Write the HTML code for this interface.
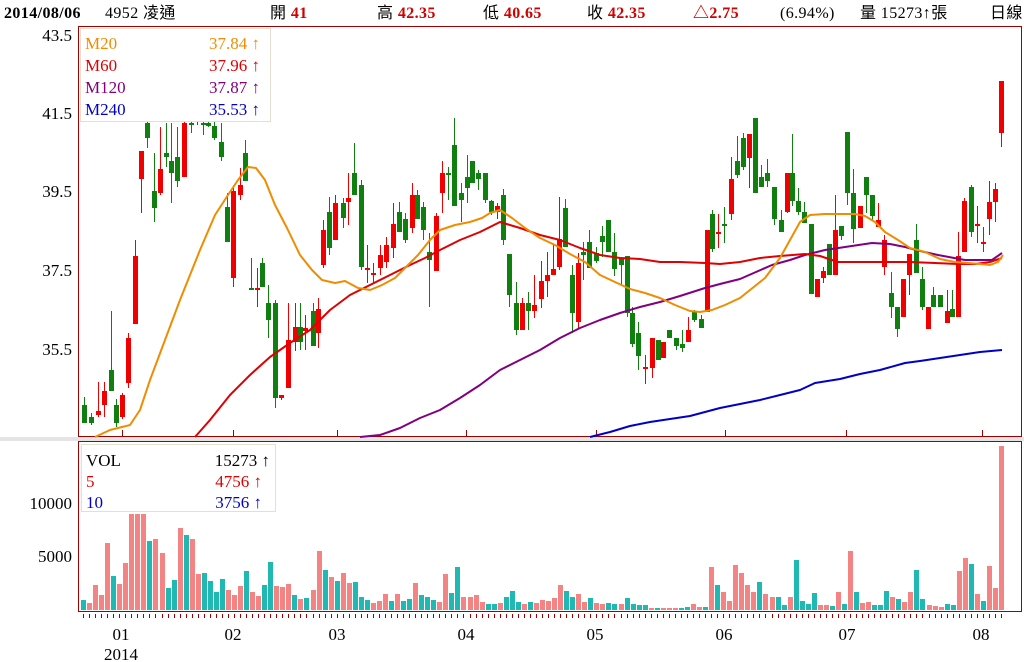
<!DOCTYPE html>
<html><head><meta charset="utf-8">
<style>
html,body{margin:0;padding:0;background:#fff;width:1024px;height:662px;overflow:hidden}
svg{display:block}
.s{font-family:"Liberation Serif","Noto Serif CJK SC",serif}
.h{font-family:"Liberation Serif","Noto Sans CJK TC",serif;font-size:16px;letter-spacing:0.4px}
</style></head><body>
<svg id="c" width="1024" height="662" xmlns="http://www.w3.org/2000/svg">
<rect x="0" y="437" width="1024" height="4" fill="#e4e4e4"/>
<text class="h" x="4" y="18" font-weight="bold" fill="#000">2014/08/06</text>
<text class="h" x="105" y="18" fill="#000">4952 凌通</text>
<text class="h" x="270" y="18" fill="#000">開 <tspan fill="#d00000" font-weight="bold">41</tspan></text>
<text class="h" x="377" y="18" fill="#000">高 <tspan fill="#d00000" font-weight="bold">42.35</tspan></text>
<text class="h" x="483" y="18" fill="#000">低 <tspan fill="#d00000" font-weight="bold">40.65</tspan></text>
<text class="h" x="587" y="18" fill="#000">收 <tspan fill="#d00000" font-weight="bold">42.35</tspan></text>
<text class="h" x="693" y="18" fill="#d00000" font-weight="bold">△2.75</text>
<text class="h" x="780" y="18" fill="#000">(6.94%)</text>
<text class="h" x="860" y="18" fill="#000">量 15273↑張</text>
<text class="h" x="990" y="18" fill="#000">日線</text>
<rect x="78.5" y="26.5" width="943" height="410" fill="none" stroke="#a00000"/>
<rect x="78.5" y="441.5" width="943" height="170" fill="none" stroke="#a00000"/>
<g class="s" font-size="17" fill="#000" text-anchor="end">
<text x="72" y="41">43.5</text><text x="72" y="119">41.5</text><text x="72" y="197">39.5</text><text x="72" y="276">37.5</text><text x="72" y="355">35.5</text>
<text x="72" y="509">10000</text><text x="72" y="562">5000</text>
</g>
<g class="s" font-size="17" fill="#000" text-anchor="middle">
<text x="121" y="640">01</text><text x="121" y="660">2014</text>
<text x="233" y="640">02</text><text x="337" y="640">03</text><text x="466" y="640">04</text>
<text x="595" y="640">05</text><text x="724" y="640">06</text><text x="847" y="640">07</text><text x="981" y="640">08</text>
</g>
<g stroke="#a00000" stroke-width="1">
<line x1="122.5" y1="430" x2="122.5" y2="437"/><line x1="233.5" y1="430" x2="233.5" y2="437"/><line x1="337.5" y1="430" x2="337.5" y2="437"/><line x1="466.5" y1="430" x2="466.5" y2="437"/><line x1="596.5" y1="430" x2="596.5" y2="437"/><line x1="725.5" y1="430" x2="725.5" y2="437"/><line x1="846.5" y1="430" x2="846.5" y2="437"/><line x1="982.5" y1="430" x2="982.5" y2="437"/>
</g>
<g id="cand"></g>
<g fill="none" stroke-width="2" stroke-linejoin="round">
<polyline stroke="#0000c8" points="590,437 610,432 630,426 650,422 670,419 690,416 705,412 720,408 740,404 760,400 780,395 800,390 815,383 840,379 860,374 880,370 905,363 920,361 940,358 960,355 980,352 1002,350"/>
<polyline stroke="#800080" points="360,437 380,435 400,428 420,418 440,410 460,398 480,385 500,370 520,360 540,350 560,338 580,328 600,320 620,313 640,307 660,302 680,296 705,288 720,284 740,279 772,265 790,260 805,255 825,250 845,247 872,243 890,244 905,247 920,251 938,255 965,260 992,260 1002,253"/>
<polyline stroke="#e00000" points="195,437 210,420 230,395 250,375 270,357 290,343 310,330 330,310 350,295 370,285 390,275 410,265 425,258 440,250 460,240 480,232 500,222 520,228 540,235 560,240 580,248 600,255 620,258 640,259 660,262 680,262 705,263 720,264 740,262 760,258 780,256 805,254 820,256 838,262 850,262 878,262 910,262 935,263 958,264 975,264 990,262 1002,258"/>
<polyline stroke="#f08c00" points="95,437 110,430 122,427 130,425 140,410 150,380 165,340 180,300 200,250 215,215 228,195 238,180 248,167 256,168 265,180 275,205 287,228 300,255 312,270 322,280 335,283 345,281 358,288 370,290 382,285 395,278 405,268 418,255 430,240 440,230 455,225 470,222 482,218 490,213 500,210 512,218 525,228 540,238 555,245 570,254 585,262 600,275 615,282 630,289 645,293 660,298 675,305 690,311 700,312 712,310 725,305 740,298 750,290 765,278 780,258 790,240 800,222 810,215 825,214 845,214 855,214 865,216 875,222 885,232 898,240 910,248 925,252 940,259 955,262 968,263 980,264 990,265 998,262 1003,255"/>
</g>
<g id="vol"></g>
<rect x="80.5" y="28.5" width="190" height="93" fill="#fff" stroke="#e6dfcf"/>
<g class="s" font-size="17">
<text x="85" y="49" fill="#f08c00">M20</text><text x="260" y="49" fill="#f08c00" text-anchor="end">37.84 ↑</text>
<text x="85" y="71" fill="#e00000">M60</text><text x="260" y="71" fill="#e00000" text-anchor="end">37.96 ↑</text>
<text x="85" y="93" fill="#800080">M120</text><text x="260" y="93" fill="#800080" text-anchor="end">37.87 ↑</text>
<text x="85" y="115" fill="#0000c8">M240</text><text x="260" y="115" fill="#0000c8" text-anchor="end">35.53 ↑</text>
</g>
<rect x="81.5" y="444.5" width="194" height="67" fill="#fff" stroke="#e6dfcf"/>
<g class="s" font-size="17">
<text x="86" y="466" fill="#000">VOL</text><text x="270" y="466" fill="#000" text-anchor="end">15273 ↑</text>
<text x="86" y="487" fill="#e00000">5</text><text x="262" y="487" fill="#e00000" text-anchor="end">4756 ↑</text>
<text x="86" y="508" fill="#0000c8">10</text><text x="262" y="508" fill="#0000c8" text-anchor="end">3756 ↑</text>
</g>
<g id="tk" stroke="#a00000"></g>
</svg>
<script>
var NS="http://www.w3.org/2000/svg";
function el(p,t,a){var e=document.createElementNS(NS,t);for(var k in a)e.setAttribute(k,a[k]);p.appendChild(e);return e;}
var C="84G405,423,397,423|91G417,423,413,425|98R411,415,382,417|104R391,405,382,417|111G370,391,311,391|116G405,423,399,427|122R395,417,393,419|128R338,383,333,388|135R256,324,240,324|141R151,179,151,213|147G123,138,113,148|154G191,208,153,222|160R169,193,127,195|166G153,157,123,167|171G161,173,123,203|177G157,181,127,187|184R123,177,113,177|191G123,125,113,133|197R115,120,110,125|203G123,125,110,135|208G123,126,110,127|214G126,138,118,140|221G142,157,123,161|227G207,242,193,242|233R191,278,188,287|240R185,195,168,200|245G153,181,140,181|251G288,289,258,289|257R288,289,268,307|262G263,287,258,287|268G303,320,285,338|275G303,398,300,408|281R395,398,395,400|288R340,388,303,388|295R327,342,303,351|300G327,342,303,350|305R328,331,315,350|313G311,346,303,346|318R309,333,298,348|323R230,265,220,268|329G212,248,197,255|335R203,240,195,240|343G203,218,198,228|348R198,202,173,225|354G173,195,143,195|361G185,267,180,270|367R268,270,245,283|373R273,275,263,283|380R255,268,245,275|386R245,262,237,268|393R224,248,203,258|399G212,232,202,232|405G219,240,213,243|412R195,228,183,233|417G195,219,190,219|423G207,230,202,240|429G252,260,233,307|436R216,271,213,271|442R173,193,161,213|448G173,174,167,200|454G145,206,118,206|461G193,200,183,222|467G177,188,155,203|472G161,183,161,183|478G173,179,170,190|485G173,200,173,203|491G201,212,200,215|497R206,212,203,219|503G195,240,189,245|509G254,295,254,307|516G303,330,282,335|522R303,330,298,330|528G303,311,292,330|534R305,311,275,318|541R281,299,261,308|547R275,281,252,297|553R269,275,245,275|559R239,267,197,270|565G208,247,199,247|572G275,313,265,333|578R263,322,253,329|583G252,255,242,280|589G242,268,230,268|596G253,261,247,263|602G236,242,226,257|608G220,252,220,252|614G252,269,233,276|621G258,265,257,286|627G256,313,256,317|632G313,344,307,347|638G333,356,322,370|645R367,369,355,384|652R338,368,338,378|658G340,360,340,360|663R342,358,342,358|669G330,338,330,338|676G338,346,338,350|682G344,348,330,352|688R330,342,317,342|694G312,320,310,322|701G319,328,315,328|707R230,312,230,312|712G214,249,210,252|718R232,233,214,248|724G224,226,207,243|731R179,214,157,220|737G161,175,136,178|743G138,167,133,170|749R134,158,134,188|755G118,193,118,193|761G177,187,165,187|767G173,181,159,187|774G187,219,187,225|781G220,232,210,232|787R173,212,173,213|792G173,201,134,206|798G201,212,188,215|804G212,223,202,223|811G224,294,224,294|817R279,297,279,297|823R271,278,267,283|829G244,275,244,275|835R230,275,195,275|841G226,236,226,240|847G132,193,132,205|853G193,229,169,243|860R206,228,206,228|866G177,195,177,213|872G195,216,195,220|878R220,227,203,227|884R240,267,235,275|891G293,307,272,318|897G307,329,307,337|903R279,317,279,317|909R254,275,254,295|916G240,273,224,273|922G279,307,267,310|928R307,329,307,329|933G295,307,287,307|940G295,307,295,307|947R311,323,290,323|952G309,317,290,317|958R256,317,232,317|964R201,252,198,252|971G187,232,185,237|977R224,225,206,243|983R242,243,227,252|989R202,219,181,235|995R189,202,183,222|1001R81,133,81,147";
var g=document.getElementById("cand");
C.split("|").forEach(function(s){var x=parseFloat(s);var m=s.match(/([RG])(.*)/);var col=m[1]=="R"?"#f00000":"#0f7f0f";var v=m[2].split(",").map(Number);
el(g,"rect",{x:x,y:v[2],width:1,height:Math.max(1,v[3]-v[2]),fill:col});
el(g,"rect",{x:x-2,y:v[0],width:5,height:Math.max(2,v[1]-v[0]),fill:col});});
var V="10T7S25S15S67S34T26S47S96S96S96S69T71S57S22T30T82S75T71S36S37T29T18T31T20S15S24S39T18S14S25T48T24S23S26S15T11S12T20S59S40T33S29T37S27S28T13T10T7S9S16S9T16S9T11T27S15T13T10T8S36S17T43T13S13S15S8S6T6T7S13T19T8T6S8T7S10S9S12S25S19T13T16S8S12T7S6S7T6T6S12T6T5T5T2S2T2S2S2S2T3T6S3S3T43S25T18S9S45S37S25S18S28T16S13S13T5T13S50T9T6T17T5S5S4T18S6T59S18T7S8S5T5T19T13S11T8S18S40T11T5S4S3S6T5T39S52S46T16S9T44S22S164S";
var vv=V.match(/\d+[ST]/g);var gv=document.getElementById("vol");var tk=document.getElementById("tk");
var n=vv.length;var step=(1001-83)/(n-1);
vv.forEach(function(s,i){var h=Math.min(parseInt(s),166);var x=Math.round(83+i*step)-2;
el(gv,"rect",{x:x,y:610-h,width:5,height:h,fill:s.slice(-1)=="S"?"#f48484":"#1fb8b2"});
el(tk,"line",{x1:x+2.5,y1:614,x2:x+2.5,y2:618});});
</script>
</body></html>
